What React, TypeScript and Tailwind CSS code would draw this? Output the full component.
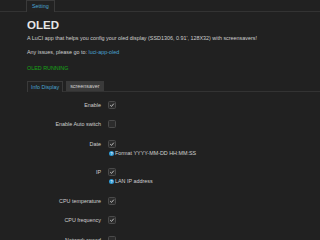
const rows = [
  { label: "Enable", checked: true },
  { label: "Enable Auto switch", checked: false },
  { label: "Date", checked: true, help: "Format YYYY-MM-DD HH:MM:SS" },
  { label: "IP", checked: true, help: "LAN IP address" },
  { label: "CPU temperature", checked: true },
  { label: "CPU frequency", checked: true },
  { label: "Network speed", checked: false },
];

function Check({ checked }: { checked: boolean }) {
  return (
    <div className="w-[8px] h-[8px] rounded-[1.5px] border border-[#4a4a4a] bg-[#2c2c2c] flex items-center justify-center">
      {checked && (
        <svg viewBox="0 0 10 10" className="w-[6px] h-[6px]">
          <path d="M2 5.2 L4.2 7.3 L8 2.8" fill="none" stroke="#d8d8d8" strokeWidth="1.4" />
        </svg>
      )}
    </div>
  );
}

export default function App() {
  return (
    <div className="w-[320px] h-[240px] overflow-hidden bg-[#212121] text-[#cfcfcf] font-['Liberation_Sans',Arial,sans-serif]">
      {/* top tabs */}
      <div className="flex items-end h-[12px] border-b border-[#333] pl-[26px]">
        <div className="h-[12px] px-[5px] border border-b-0 border-[#3a3a3a] bg-[#222] text-[#4aa3d0] text-[5.4px] leading-[11px] -mb-px">
          Setting
        </div>
      </div>

      <div className="pl-[27px]">
        <h2 className="mt-[7px] text-[11.5px] font-bold text-[#e6e6e6] leading-[13px]">OLED</h2>
        <p className="mt-[3px] text-[5.4px] leading-[7px]">
          A LuCI app that helps you config your oled display (SSD1306, 0.91', 128X32) with screensavers!
        </p>
        <p className="mt-[7px] text-[5.4px] leading-[7px]">
          Any issues, please go to: <span className="text-[#4aa3d0]">luci-app-oled</span>
        </p>
        <p className="mt-[9px] text-[5.4px] leading-[7px] text-[#16a516]">OLED RUNNING</p>

        {/* tabs */}
        <div className="mt-[9px] flex items-end gap-[3px] h-[11px] border-b border-[#333]">
          <div className="h-[11px] px-[3px] border border-b-0 border-[#3a3a3a] bg-[#222] text-[#4aa3d0] text-[5.4px] leading-[10px] -mb-px">
            Info Display
          </div>
          <div className="h-[10px] px-[4px] bg-[#3a3a3a] text-[#d0d0d0] text-[5.4px] leading-[10px]">
            screensaver
          </div>
        </div>

        {/* form rows */}
        <div className="mt-[3px] flex flex-col">
          {rows.map((r) => (
            <div key={r.label} className="flex flex-col py-[5.75px]">
              <div className="flex items-center">
                <div className="w-[81px] text-right text-[5.4px] leading-[8px] pr-[7px]">{r.label}</div>
                <Check checked={r.checked} />
              </div>
              {r.help && (
                <div className="flex items-center ml-[82px] mt-[2px] text-[5.4px] leading-[7px]">
                  <span className="w-[5px] h-[5px] rounded-full bg-[#2e9ad6] text-[#fff] text-[4px] leading-[5px] text-center mr-[1px] font-bold">
                    ?
                  </span>
                  {r.help}
                </div>
              )}
            </div>
          ))}
        </div>
      </div>
    </div>
  );
}
